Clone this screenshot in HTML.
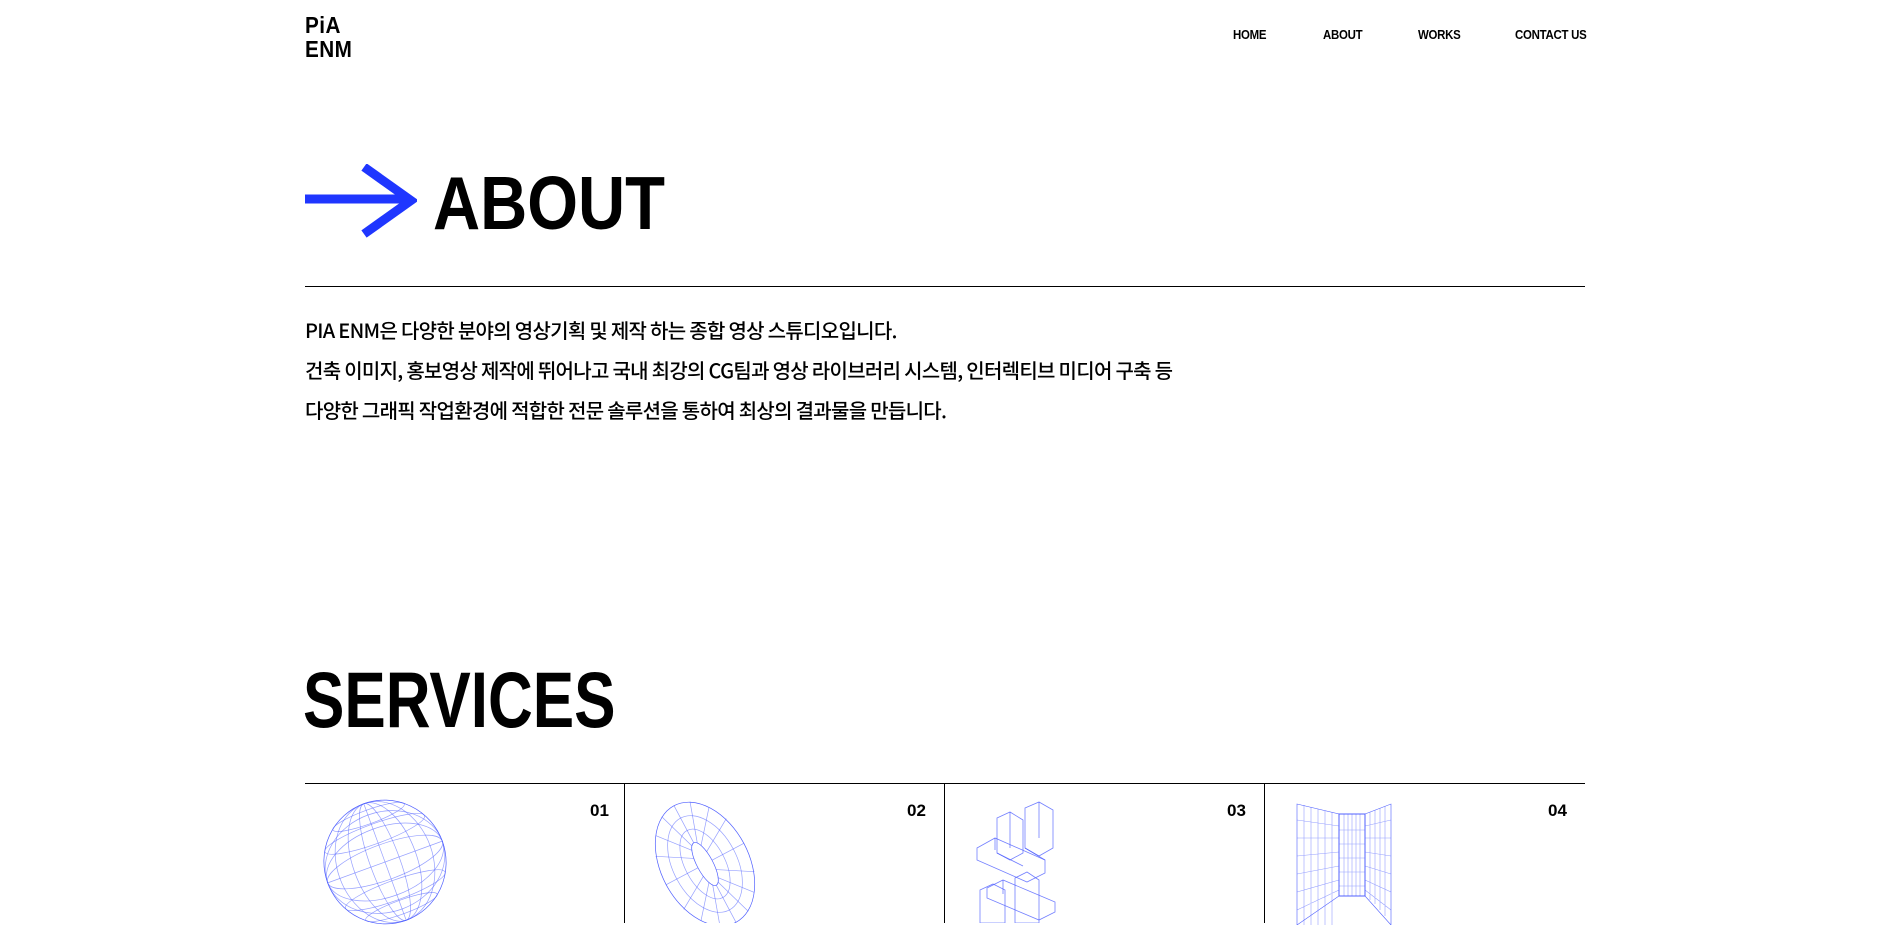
<!DOCTYPE html>
<html><head><meta charset="utf-8"><style>
*{margin:0;padding:0;box-sizing:border-box}
body{width:1892px;height:921px;overflow:hidden;background:#fff;position:relative;font-family:"Liberation Sans","Noto Sans CJK KR",sans-serif;color:#000}
.a{position:absolute;white-space:nowrap}
.nav{font-weight:bold;font-size:13px;top:27px;letter-spacing:-0.3px;transform:scaleX(0.88);transform-origin:left}
.logo{left:305px;font-weight:bold;font-size:23px;letter-spacing:0.5px;line-height:1;transform:scaleX(0.9);transform-origin:left}
.p{left:305px;font-size:20px;font-weight:500;letter-spacing:-0.7px;font-family:"Noto Sans CJK KR","Liberation Sans",sans-serif;line-height:1}
.num{font-weight:bold;font-size:17px;top:801px}
.vl{position:absolute;top:783px;width:1.5px;height:140px;background:#000}
svg line,svg ellipse,svg path,svg polygon{vector-effect:non-scaling-stroke}
</style></head><body>
<div class="a logo" style="top:14px">PiA</div>
<div class="a logo" style="top:38px">ENM</div>
<div class="a nav" style="left:1233px">HOME</div>
<div class="a nav" style="left:1323px">ABOUT</div>
<div class="a nav" style="left:1418px">WORKS</div>
<div class="a nav" style="left:1515px">CONTACT US</div>

<svg class="a" style="left:305px;top:164px" width="112" height="74"><path d="M0 35H104" stroke="#1f36ff" stroke-width="9"/><path d="M59 3L106 36.5L59 70" fill="none" stroke="#1f36ff" stroke-width="9"/></svg>
<div class="a" style="left:433px;top:166px;font-weight:bold;font-size:75px;line-height:1;transform:scaleX(0.87);transform-origin:left">ABOUT</div>
<div class="a" style="left:305px;top:286px;width:1280px;height:1px;background:#000"></div>

<div class="a p" style="top:320px">PIA ENM은 다양한 분야의 영상기획 및 제작 하는 종합 영상 스튜디오입니다.</div>
<div class="a p" style="top:360px">건축 이미지, 홍보영상 제작에 뛰어나고 국내 최강의 CG팀과 영상 라이브러리 시스템, 인터렉티브 미디어 구축 등</div>
<div class="a p" style="top:400px">다양한 그래픽 작업환경에 적합한 전문 솔루션을 통하여 최상의 결과물을 만듭니다.</div>

<div class="a" style="left:303px;top:660px;font-weight:bold;font-size:79px;line-height:1;transform:scaleX(0.785);transform-origin:left">SERVICES</div>
<div class="a" style="left:305px;top:783px;width:1280px;height:1.2px;background:#000"></div>
<div class="vl" style="left:624px;width:1.2px"></div>
<div class="vl" style="left:944px;width:1.2px"></div>
<div class="vl" style="left:1264px;width:1.2px"></div>
<div class="a num" style="left:590px">01</div>
<div class="a num" style="left:907px">02</div>
<div class="a num" style="left:1227px">03</div>
<div class="a num" style="left:1548px">04</div>

<svg class="a" style="left:320px;top:795px" width="130" height="130" fill="none" stroke="#5060ff" stroke-width="0.7" stroke-opacity="0.6">
<g transform="translate(65,67) rotate(-20)">
<ellipse rx="61" ry="62" stroke-opacity="1"/>
<ellipse rx="48" ry="62"/><ellipse rx="32" ry="62"/><ellipse rx="15" ry="62"/>
<ellipse rx="61" ry="50"/><ellipse rx="61" ry="35"/><ellipse rx="61" ry="18"/>
<line x1="-61" y1="0" x2="61" y2="0"/><line x1="0" y1="-62" x2="0" y2="62"/>
<ellipse cx="0" cy="-30" rx="53" ry="10"/><ellipse cx="0" cy="30" rx="53" ry="10"/>
<ellipse cx="0" cy="-48" rx="38" ry="7"/><ellipse cx="0" cy="48" rx="38" ry="7"/>
</g></svg>

<svg class="a" style="left:645px;top:798px" width="125" height="125" fill="none" stroke="#5060ff" stroke-width="0.7" stroke-opacity="0.6">
<g transform="translate(60,66) rotate(-28)">
<ellipse rx="44" ry="66" stroke-opacity="1"/>
<ellipse rx="8" ry="24" stroke-opacity="1"/>
<ellipse rx="20" ry="38"/><ellipse rx="32" ry="52"/>
<path d="M0-24L0-66M0 24L0 66M8 0L44 0M-8 0L-44 0M5-18L30-48M-5-18L-30-48M5 18L30 48M-5 18L-30 48M7-10L40-30M-7-10L-40-30M7 10L40 30M-7 10L-40 30M3-22L16-62M-3-22L-16-62M3 22L16 62M-3 22L-16 62"/>
</g></svg>

<svg class="a" style="left:975px;top:798px" width="100" height="125" fill="none" stroke="#5060ff" stroke-width="0.8" stroke-opacity="0.8">
<polygon points="22,20 35,14 48,22 48,55 35,62 22,55"/>
<polygon points="50,10 64,4 78,12 78,50 64,58 50,50"/>
<polygon points="2,50 20,40 70,62 70,75 52,84 2,62"/>
<polygon points="12,90 28,82 80,104 80,114 64,122 12,100"/>
<polygon points="5,92 18,86 30,92 30,125 5,125"/>
<polygon points="40,80 52,74 64,82 64,125 40,125"/>
<path d="M35 14V50M64 4V40M20 40V52M28 82V96M22 55L48 68M50 50L70 62"/>
</svg>

<svg class="a" style="left:1295px;top:800px" width="100" height="125" fill="none" stroke="#5060ff" stroke-width="0.6" stroke-opacity="0.6">
<polygon points="2,4 44,14 44,96 2,125" stroke-opacity="1"/>
<polygon points="44,14 70,14 70,96 44,96" stroke-opacity="1" stroke-width="1"/>
<polygon points="70,14 96,4 96,125 70,96" stroke-opacity="1"/>
<path d="M9 5V125M16 7V125M23 9V125M30 11V125M37 12V125M49 14V96M53 14V96M57 14V96M61 14V96M65 14V96M75 12V100M80 10V104M85 8V110M90 6V116M2 20L44 26M2 38L44 38M2 56L44 52M2 74L44 66M2 92L44 80M2 110L44 90M44 30H70M44 44H70M44 58H70M44 72H70M44 86H70M70 26L96 20M70 38L96 38M70 52L96 56M70 66L96 74M70 80L96 92M70 90L96 110"/>
</svg>
</body></html>
